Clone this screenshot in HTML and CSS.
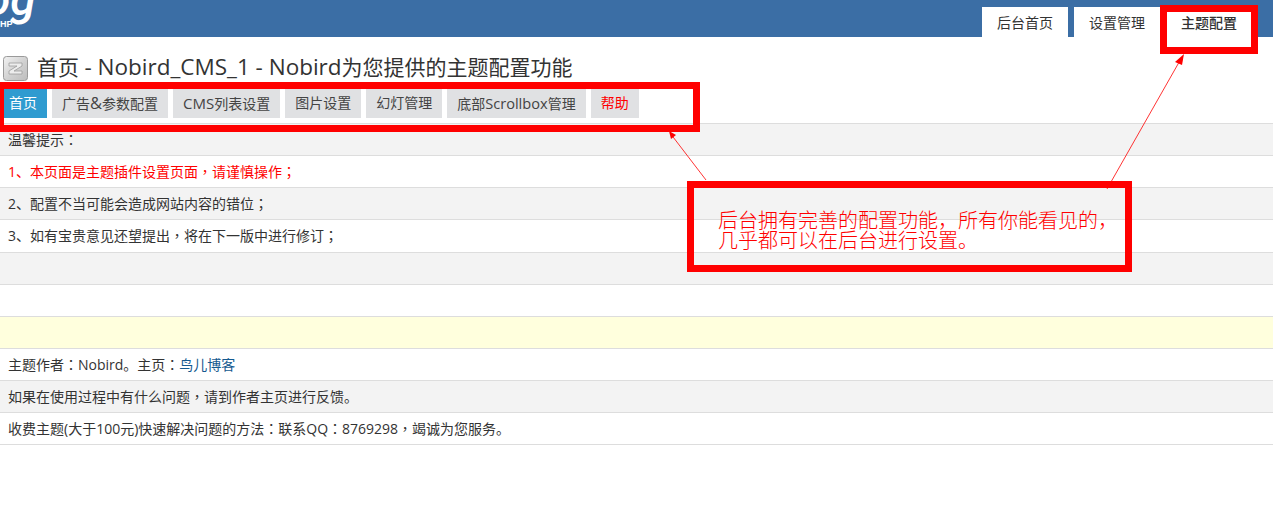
FILE: index.html
```html
<!DOCTYPE html>
<html lang="zh-CN">
<head>
<meta charset="utf-8">
<title>主题配置</title>
<link rel="stylesheet" href="styles.css">
</head>
<body>
<header class="topbar">
  <div class="logo"><span class="logo-mark">og</span><span class="logo-sub">HP</span></div>
  <nav class="top-tabs">
    <a class="top-tab">后台首页</a>
    <a class="top-tab">设置管理</a>
    <a class="top-tab top-tab-active">主题配置</a>
  </nav>
</header>
<main>
  <h1 class="page-title">
    <svg class="title-icon" viewBox="0 0 25 25" aria-hidden="true">
      <defs><linearGradient id="g" x1="0" y1="0" x2="1" y2="1"><stop offset="0" stop-color="#f2f2f2"/><stop offset="0.55" stop-color="#d0d0d0"/><stop offset="1" stop-color="#bdbdbd"/></linearGradient></defs>
      <rect x="0.5" y="0.5" width="24" height="24" rx="3" fill="url(#g)" stroke="#9a9a9a"/>
      <path d="M6 7h13v3l-8 5h8v3H6v-3l8-5H6z" fill="#ededed" stroke="#9c9c9c" stroke-width="0.8"/>
    </svg>
    <span>首页 <span class="title-latin">- Nobird_CMS_1 - Nobird</span>为您提供的主题配置功能</span>
  </h1>
  <nav class="sub-nav">
    <a class="sub-item sub-active">首页</a>
    <a class="sub-item">广告<span class="amp">&amp;</span>参数配置</a>
    <a class="sub-item"><span class="lat">CMS</span>列表设置</a>
    <a class="sub-item">图片设置</a>
    <a class="sub-item">幻灯管理</a>
    <a class="sub-item">底部<span class="lat-nav">Scrollbox</span>管理</a>
    <a class="sub-item sub-help">帮助</a>
  </nav>
  <section class="rows">
    <div class="row alt">温馨提示<span class="pn" lang="zh-TW">：</span></div>
    <div class="row warn">1、本页面是主题插件设置页面<span class="pn" lang="zh-TW">，</span>请谨慎操作<span class="pn" lang="zh-TW">；</span></div>
    <div class="row alt">2、配置不当可能会造成网站内容的错位<span class="pn" lang="zh-TW">；</span></div>
    <div class="row row-tall">3、如有宝贵意见还望提出<span class="pn" lang="zh-TW">，</span>将在下一版中进行修订<span class="pn" lang="zh-TW">；</span></div>
    <div class="row alt"></div>
    <div class="row"></div>
    <div class="row note"></div>
    <div class="row">主题作者<span class="pn" lang="zh-TW">：</span>Nobird。主页<span class="pn" lang="zh-TW">：</span><a class="link">鸟儿博客</a></div>
    <div class="row alt">如果在使用过程中有什么问题<span class="pn" lang="zh-TW">，</span>请到作者主页进行反馈。</div>
    <div class="row">收费主题(大于100元)快速解决问题的方法<span class="pn" lang="zh-TW">：</span>联系QQ<span class="pn" lang="zh-TW">：</span>8769298<span class="pn" lang="zh-TW">，</span>竭诚为您服务。</div>
  </section>
</main>

<div class="mark mark-nav"></div>
<div class="mark mark-tab"></div>
<div class="mark mark-note">
  <p class="mark-text">后台拥有完善的配置功能，所有你能看见的，<br>几乎都可以在后台进行设置。</p>
</div>
<svg class="arrows" viewBox="0 0 1273 515" aria-hidden="true">
  <path d="M706 180L670 133M1107 189L1182 57" fill="none" stroke="#f00" stroke-width="0.8"/>
  <path d="M669 131L671 139L676 135z" fill="#f00"/>
  <path d="M1184 54L1175 62L1182 65z" fill="#f00"/>
</svg>
</body>
</html>
```
FILE: styles.css
```css
* { box-sizing: border-box; }
html, body { margin: 0; padding: 0; }
body {
  position: relative;
  height: 515px;
  overflow: hidden;
  background: #fff;
  color: #333;
  font-family: "Open Sans", "Noto Sans CJK SC", sans-serif;
  font-size: 14px;
}
.topbar {
  position: relative;
  height: 37px;
  background: #3b6ea5;
  display: flex;
  justify-content: flex-end;
  align-items: flex-end;
  padding-right: 21px;
  overflow: hidden;
}
.logo { position: absolute; left: 0; top: 0; color: #fff; }
.logo-mark {
  position: absolute;
  left: -15px;
  top: -21px;
  font: italic 500 46px/40px Roboto, sans-serif;
}
.logo-sub {
  position: absolute;
  left: 0;
  top: 20px;
  font: bold 9px/9px "Liberation Sans", sans-serif;
}
.top-tabs { display: flex; gap: 6px; }
.top-tab {
  width: 86px;
  height: 30px;
  background: #fff;
  text-align: center;
  line-height: 31px;
  font-size: 14px;
  color: #333;
}
.top-tab-active { font-weight: 500; }
.page-title {
  margin: 0;
  height: 52px;
  padding: 19px 0 0 3px;
  display: flex;
  align-items: flex-start;
  gap: 9px;
  font-size: 21px;
  font-weight: 400;
  line-height: 22px;
  color: #333;
}
.title-latin { font-size: 22.5px; }
.title-icon { width: 25px; height: 25px; flex: none; }
.sub-nav {
  display: flex;
  gap: 5px;
  height: 34px;
}
.sub-item {
  height: 29px;
  padding: 0 10px;
  background: #e0e1e3;
  line-height: 28px;
  font-size: 14px;
  color: #444;
}
.sub-active { background: #2f9bd0; color: #fff; padding-left: 9px; }
.sub-help { color: #f00; }
.lat { font-size: 15px; }
.lat-nav { font-size: 14.6px; }
.amp { font-size: 16.5px; }
.pn { font-family: "Noto Sans CJK TC", sans-serif; }
.rows { border-top: 1px solid #ddd; }
.row {
  height: 32px;
  padding-left: 8px;
  line-height: 31px;
  border-bottom: 1px solid #ddd;
  color: #333;
}
.row-tall { height: 33px; }
.alt { background: #f3f3f3; }
.note { background: #ffd; }
.warn { color: #f00; }
.link { color: #14598f; }
.mark { position: absolute; border: 7px solid #f00; }
.mark-nav { left: -3px; top: 82px; width: 703px; height: 50px; }
.mark-tab { left: 1160px; top: 5px; width: 98px; height: 49px; }
.mark-note { left: 687px; top: 181px; width: 445px; height: 91px; }
.mark-text {
  margin: 0;
  padding: 22px 0 0 24px;
  font-family: "Noto Sans CJK SC", sans-serif;
  font-weight: 300;
  font-size: 20px;
  line-height: 20px;
  color: #f00;
  white-space: nowrap;
}
.arrows { position: absolute; left: 0; top: 0; width: 1273px; height: 515px; pointer-events: none; }
```
